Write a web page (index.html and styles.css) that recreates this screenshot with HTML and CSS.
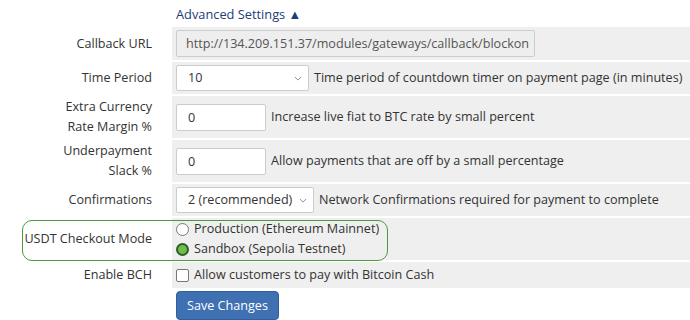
FILE: index.html
```html
<!DOCTYPE html>
<html lang="en">
<head>
    <meta charset="UTF-8">
    <title>Gateway Settings</title>
    <link rel="stylesheet" href="styles.css">
</head>
<body>
    <div class="settings">
        <div class="toggle"><a href="#">Advanced Settings &#9650;</a></div>

        <div class="row">
            <div class="label">Callback URL</div>
            <div class="value">
                <div class="input wide disabled">http://134.209.151.37/modules/gateways/callback/blockon</div>
            </div>
        </div>

        <div class="row">
            <div class="label">Time Period</div>
            <div class="value">
                <div class="select period">10<svg class="chev" viewBox="0 0 10 6"><path d="M1 1l4 4 4-4"/></svg></div>
                <span class="hint">Time period of countdown timer on payment page (in minutes)</span>
            </div>
        </div>

        <div class="row">
            <div class="label">Extra Currency<br>Rate Margin %</div>
            <div class="value">
                <div class="input small">0</div>
                <span class="hint">Increase live fiat to BTC rate by small percent</span>
            </div>
        </div>

        <div class="row">
            <div class="label">Underpayment<br>Slack %</div>
            <div class="value">
                <div class="input small">0</div>
                <span class="hint">Allow payments that are off by a small percentage</span>
            </div>
        </div>

        <div class="row">
            <div class="label">Confirmations</div>
            <div class="value">
                <div class="select confirm">2 (recommended)<svg class="chev" viewBox="0 0 10 6"><path d="M1 1l4 4 4-4"/></svg></div>
                <span class="hint">Network Confirmations required for payment to complete</span>
            </div>
        </div>

        <div class="row highlight">
            <div class="label">USDT Checkout Mode</div>
            <div class="value stack">
                <label class="option"><span class="radio"></span>Production (Ethereum Mainnet)</label>
                <label class="option"><span class="radio checked"></span>Sandbox (Sepolia Testnet)</label>
            </div>
            <div class="marker"></div>
        </div>

        <div class="row">
            <div class="label">Enable BCH</div>
            <div class="value">
                <label class="option"><span class="checkbox"></span>Allow customers to pay with Bitcoin Cash</label>
            </div>
        </div>

        <div class="actions">
            <button class="btn">Save Changes</button>
        </div>
    </div>
</body>
</html>
```

FILE: styles.css
```css
body {
    margin: 0;
    font-family: "Open Sans", Arial, sans-serif;
    font-size: 12.6px;
    color: #333;
    background: #fff;
}
.settings {
    width: 690px;
}
.toggle {
    height: 27px;
    padding-left: 176px;
    line-height: 28px;
}
.toggle a {
    color: #1d3c78;
    text-decoration: none;
    font-size: 12.8px;
}
.row {
    position: relative;
    display: grid;
    grid-template-columns: 172px 1fr;
    margin-bottom: 2px;
}
.label {
    text-align: right;
    padding: 1px 20px 1px 0;
    line-height: 20px;
    display: flex;
    align-items: center;
    justify-content: flex-end;
}
.value {
    background: #efefef;
    padding: 3px 4px;
    display: flex;
    align-items: center;
    line-height: 20px;
}
.value.stack {
    flex-direction: column;
    align-items: flex-start;
    padding: 1px 4px;
}
.input, .select {
    height: 27px;
    box-sizing: border-box;
    border: 1px solid #ccc;
    background: #fff;
    padding: 0 11px;
    line-height: 25px;
    border-radius: 2px;
}
.input.disabled {
    background: #eee;
    color: #555;
}
.input.wide {
    width: 359px;
    padding: 0 9px;
}
.input.small {
    width: 90px;
}
.select {
    position: relative;
    height: 26px;
    line-height: 24px;
}
.select.period {
    width: 133px;
}
.select.confirm {
    width: 138px;
}
.chev {
    position: absolute;
    right: 6px;
    top: 10px;
    width: 8px;
    height: 5px;
    fill: none;
    stroke: #777;
    stroke-width: 1;
}
.hint {
    margin-left: 5px;
    white-space: nowrap;
}
.option {
    display: flex;
    align-items: center;
    height: 20px;
}
.radio {
    width: 13px;
    height: 13px;
    border: 1px solid #777;
    border-radius: 50%;
    background: #fff;
    margin: 0 5px 0 0;
    box-sizing: border-box;
}
.radio.checked {
    background: #6cbf4a;
    border: 2px solid #2f5a2a;
}
.checkbox {
    width: 13px;
    height: 13px;
    border: 1px solid #777;
    border-radius: 2px;
    background: #fff;
    margin: 0 5px 0 0;
    box-sizing: border-box;
}
.marker {
    position: absolute;
    left: 22px;
    top: 2px;
    width: 366px;
    height: 41px;
    box-sizing: border-box;
    border: 1.5px solid #4c9a3c;
    border-radius: 10px;
    pointer-events: none;
}
.actions {
    padding: 1px 0 0 176px;
}
.btn {
    width: 103px;
    height: 29px;
    border: 1px solid #2e5f9e;
    border-radius: 4px;
    background: #3e70b2;
    color: #fff;
    font-family: "Open Sans", Arial, sans-serif;
    font-size: 12.6px;
    padding: 0;
}
```
